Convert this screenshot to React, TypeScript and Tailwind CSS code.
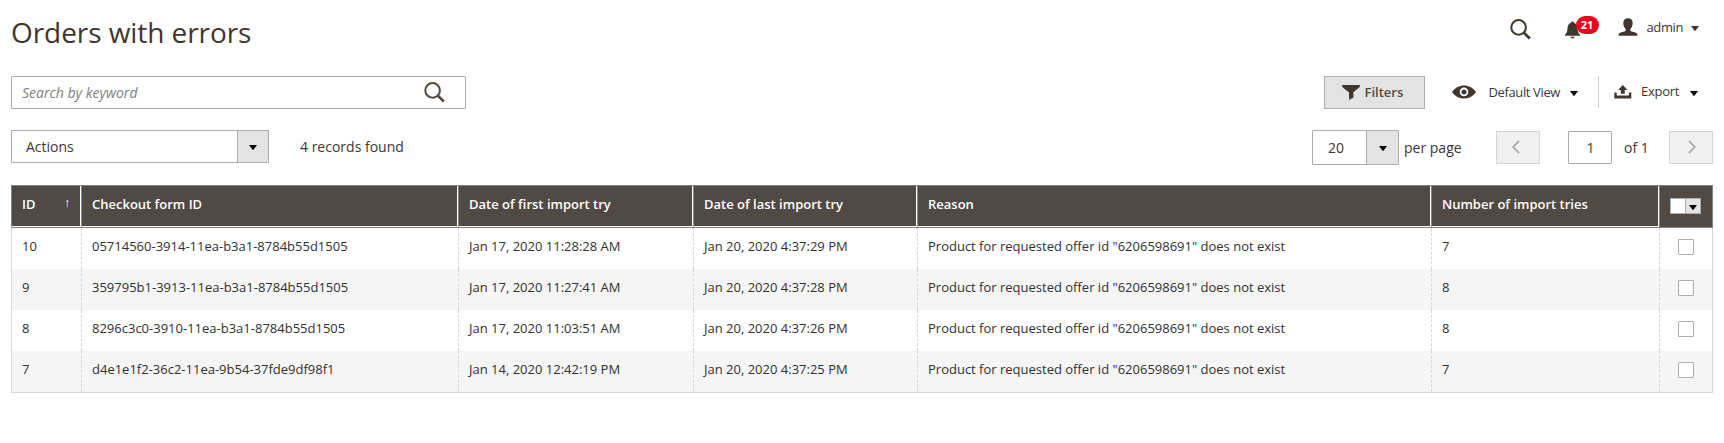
import React from "react";

const COLUMNS =
  "grid grid-cols-[70px_377px_235px_224px_514px_228px_54px]";

const HEADINGS = [
  "Checkout form ID",
  "Date of first import try",
  "Date of last import try",
  "Reason",
  "Number of import tries",
];

const REASON = 'Product for requested offer id "6206598691" does not exist';

const ORDERS = [
  ["10", "05714560-3914-11ea-b3a1-8784b55d1505", "Jan 17, 2020 11:28:28 AM", "Jan 20, 2020 4:37:29 PM", REASON, "7"],
  ["9", "359795b1-3913-11ea-b3a1-8784b55d1505", "Jan 17, 2020 11:27:41 AM", "Jan 20, 2020 4:37:28 PM", REASON, "8"],
  ["8", "8296c3c0-3910-11ea-b3a1-8784b55d1505", "Jan 17, 2020 11:03:51 AM", "Jan 20, 2020 4:37:26 PM", REASON, "8"],
  ["7", "d4e1e1f2-36c2-11ea-9b54-37fde9df98f1", "Jan 14, 2020 12:42:19 PM", "Jan 20, 2020 4:37:25 PM", REASON, "7"],
];

function Caret({ className }: { className: string }) {
  return (
    <svg viewBox="0 0 8 5" className={`h-[5px] w-2 shrink-0 ${className}`}>
      <path d="M0 0h8L4.6 4.6q-.6.6-1.2 0z" fill="currentColor" />
    </svg>
  );
}

function SearchIcon({ className }: { className: string }) {
  return (
    <svg viewBox="0 0 21 21" className={`h-[21px] w-[21px] shrink-0 ${className}`} fill="none" stroke="currentColor">
      <circle cx="8.6" cy="8.4" r="7.3" strokeWidth="2" />
      <path d="M13.8 13.6l6 5.900" strokeWidth="2.7" />
    </svg>
  );
}

function BellIcon() {
  return (
    <svg viewBox="0 0 15 18" className="h-[18px] w-[15px] text-[#41362f]" fill="currentColor">
      <path d="M7.5.5c.8 0 1.3.5 1.4 1.2 2.2.7 3.3 2.4 3.5 4.9.2 4 .8 5.700 2.600 7.100v1H0v-1c1.800-1.400 2.400-3.100 2.600-7.100.2-2.500 1.300-4.200 3.500-4.900C6.200 1 6.700.5 7.500.5z" />
      <path d="M5.400 15.700h4.200c-.2 1-1 1.600-2.100 1.600s-1.900-.6-2.100-1.600z" />
    </svg>
  );
}

function UserIcon() {
  return (
    <svg viewBox="0 0 20 18" className="h-[18px] w-5 text-[#41362f]" fill="currentColor">
      <path d="M10 .3c3 0 4.700 1.800 4.700 4.700 0 2.400-.9 4.700-2.300 6v1.300c0 .6.4.8 1.200 1.100l3.700 1.100c1.600.5 2.200 1.400 2.200 3.200H.5c0-1.800.6-2.700 2.200-3.200l3.700-1.100c.8-.3 1.200-.5 1.200-1.100V11C6.200 9.700 5.300 7.400 5.300 5 5.300 2.100 7 .3 10 .3z" />
    </svg>
  );
}

function FunnelIcon() {
  return (
    <svg viewBox="0 0 18 15" className="h-[15px] w-[18px] text-[#41362f]" fill="currentColor">
      <path d="M0 0h18c0 1.600-.5 2.300-1.500 3.100L11.400 7.300v5.200L7.100 15V7.600L1.500 3.100C.5 2.300 0 1.600 0 0z" />
    </svg>
  );
}

function EyeIcon() {
  return (
    <svg viewBox="0 0 24 14" className="h-[14px] w-6 -translate-y-px text-[#41362f]">
      <path d="M0 7.200C3.200 2.500 7.300.5 12 .5s8.800 2 12 6.700c-3.200 4.400-7.300 6.400-12 6.400S3.200 11.600 0 7.200z" fill="currentColor" />
      <circle cx="12" cy="6.900" r="3.400" fill="none" stroke="white" strokeWidth="1.800" />
    </svg>
  );
}

function ExportIcon() {
  return (
    <svg viewBox="0 0 18 14" className="h-[14px] w-[18px] text-[#41362f]" fill="currentColor">
      <path d="M8.800 0l4.700 4.900h-2.700v3.900H6.800V4.900H4.100z" />
      <path d="M0.300 7.600h2.400v2.900h12.200V7.600h2.400v6H.3z" />
    </svg>
  );
}

function Chevron({ d }: { d: string }) {
  return (
    <svg viewBox="0 0 8 14" className="h-[14px] w-2" fill="none" stroke="#a6a39f" strokeWidth="1.700">
      <path d={d} />
    </svg>
  );
}

function PageHeader() {
  return (
    <header className="flex h-[76px] items-start justify-between">
      <h1 className="pt-[11px] text-[28px] leading-[42px] tracking-[-0.07px] text-[#41362f]">Orders with errors</h1>
      <div className="flex h-[54px] items-center pr-[14px]">
        <SearchIcon className="mt-1 mr-[34px] text-[#41362f]" />
        <div className="relative mt-[5px] mr-[38px]">
          <BellIcon />
          <span className="absolute -top-[5px] left-[11px] flex h-[18px] w-[23px] items-center justify-center rounded-[9px] bg-[#f0001c] text-[11px] leading-none font-bold text-white">
            21
          </span>
        </div>
        <UserIcon />
        <span className="ml-[9px] text-[13px] leading-5 tracking-[-0.4px] text-[#41362f]">admin</span>
        <Caret className="mt-[3px] ml-2 text-[#41362f]" />
      </div>
    </header>
  );
}

function SearchRow() {
  return (
    <div className="flex h-[33px] justify-between">
      <div className="flex w-[455px] items-center justify-between rounded-[1px] border border-[#adadad] pr-5 pl-[10px]">
        <span className="text-[14px] leading-5 text-[#808080] italic">Search by keyword</span>
        <SearchIcon className="text-[#514943]" />
      </div>
      <div className="flex items-center pr-[15px] text-[13px] text-[#41362f]">
        <button className="flex h-[33px] w-[101px] items-center border border-[#adadad] bg-[#e3e3e3] pl-[17px] font-semibold text-[#514943]">
          <FunnelIcon />
          <span className="ml-1">Filters</span>
        </button>
        <div className="ml-[27px] flex items-center">
          <EyeIcon />
          <span className="ml-3 tracking-[-0.37px]">Default View</span>
          <Caret className="mt-px ml-[10px] text-black" />
        </div>
        <div className="ml-5 flex h-8 items-center self-start border-l border-[#cccccc] pl-[15px]">
          <ExportIcon />
          <span className="ml-[9px] tracking-[-0.3px]">Export</span>
          <Caret className="mt-[2px] ml-[11px] text-black" />
        </div>
      </div>
    </div>
  );
}

function ActionsRow() {
  return (
    <div className="mt-[21px] flex h-[35px] items-start justify-between text-[14px] text-[#41362f]">
      <div className="flex h-[33px] items-center">
        <div className="flex h-[33px] w-[258px] border border-[#adadad]">
          <span className="flex-1 pl-[14px] leading-[31px]">Actions</span>
          <span className="flex w-[31px] items-center justify-center border-l border-[#adadad] bg-[#e3e3e3]">
            <Caret className="mt-[2px] text-black" />
          </span>
        </div>
        <span className="ml-[31px]">4 records found</span>
      </div>
      <div className="flex h-[35px] items-center">
        <div className="flex h-[35px] w-[87px] rounded-[1px] border border-[#adadad]">
          <span className="flex-1 pl-[15px] leading-[33px]">20</span>
          <span className="flex w-8 items-center justify-center border-l border-[#adadad] bg-[#e3e3e3]">
            <Caret className="mt-[2px] text-black" />
          </span>
        </div>
        <span className="ml-[5px] w-[92px]">per page</span>
        <button className="flex h-[33px] w-11 items-center justify-center border border-[#d6d6d6] bg-[#f0f0f0] pr-1 pb-[2px]">
          <Chevron d="M7 1L1.200 7 7 13" />
        </button>
        <span className="ml-7 h-[33px] w-11 rounded-[1px] border border-[#adadad] pl-px text-center leading-[31px]">1</span>
        <span className="ml-3 w-[45px]">of 1</span>
        <button className="flex h-[33px] w-11 items-center justify-center border border-[#d6d6d6] bg-[#f0f0f0] pb-[2px] pl-[2px]">
          <Chevron d="M1 1l5.800 6L1 13" />
        </button>
      </div>
    </div>
  );
}

function OrdersTable() {
  return (
    <div className="mt-5 w-[1702px] text-[13px]">
      <div className={`${COLUMNS} h-[43px] border-y border-[#8a837f] bg-[#514943] font-semibold text-white`}>
        <div className="flex justify-between border-r border-b border-l border-r-white border-b-white border-l-[#8a837f] pr-2 pl-[10px] leading-[37px]">
          <span>ID</span>
          <span className="w-[8px] text-[12px] leading-[34px] font-normal">↑</span>
        </div>
        {HEADINGS.map((heading) => (
          <div key={heading} className="border-r border-b border-l border-r-white border-b-white border-l-[#8a837f] pl-[10px] leading-[37px]">
            {heading}
          </div>
        ))}
        <div className="flex border-x border-[#8a837f] pt-3 pl-[10px]">
          <div className="flex h-4 w-[31px] border border-[#adadad] bg-white">
            <span className="w-[14px]" />
            <span className="flex flex-1 items-center justify-center border-l border-[#adadad] bg-[#e3e3e3]">
              <Caret className="mt-[2px] text-black" />
            </span>
          </div>
        </div>
      </div>
      <div className="border-x border-b border-[#d6d6d6] text-[#303030]">
        {ORDERS.map((order) => (
          <div
            key={order[0]}
            className="grid h-[41px] grid-cols-[69px_377px_235px_224px_514px_228px_53px] odd:bg-white even:bg-[#f5f5f5]"
          >
            {order.map((value, i) => (
              <div
                key={i}
                className={
                  i === 0
                    ? "pl-[10px] leading-[37px]"
                    : "border-l border-dashed border-[#d6d6d6] pl-[10px] leading-[37px]"
                }
              >
                {value}
              </div>
            ))}
            <div className="border-l border-dashed border-[#d6d6d6] pt-[11px] pl-[18px]">
              <div className="h-4 w-4 rounded-[1px] border border-[#adadad] bg-white" />
            </div>
          </div>
        ))}
      </div>
    </div>
  );
}

export default function App() {
  return (
    <div className="h-[443px] w-[1724px] bg-white pr-[11px] pl-[11px] font-['Open_Sans',sans-serif]">
      <PageHeader />
      <SearchRow />
      <ActionsRow />
      <OrdersTable />
    </div>
  );
}
